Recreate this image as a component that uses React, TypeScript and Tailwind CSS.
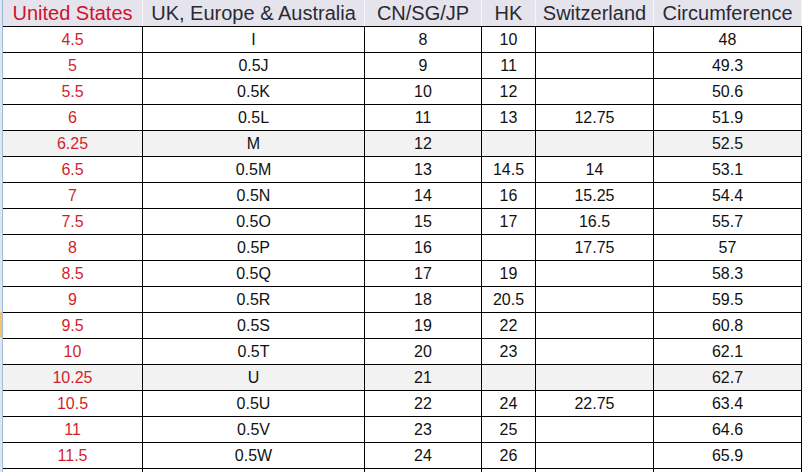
import React from "react";

const rows: [string, string, string, string, string, string, boolean?][] = [
  ["4.5", "I", "8", "10", "", "48"],
  ["5", "0.5J", "9", "11", "", "49.3"],
  ["5.5", "0.5K", "10", "12", "", "50.6"],
  ["6", "0.5L", "11", "13", "12.75", "51.9"],
  ["6.25", "M", "12", "", "", "52.5", true],
  ["6.5", "0.5M", "13", "14.5", "14", "53.1"],
  ["7", "0.5N", "14", "16", "15.25", "54.4"],
  ["7.5", "0.5O", "15", "17", "16.5", "55.7"],
  ["8", "0.5P", "16", "", "17.75", "57"],
  ["8.5", "0.5Q", "17", "19", "", "58.3"],
  ["9", "0.5R", "18", "20.5", "", "59.5"],
  ["9.5", "0.5S", "19", "22", "", "60.8"],
  ["10", "0.5T", "20", "23", "", "62.1"],
  ["10.25", "U", "21", "", "", "62.7", true],
  ["10.5", "0.5U", "22", "24", "22.75", "63.4"],
  ["11", "0.5V", "23", "25", "", "64.6"],
  ["11.5", "0.5W", "24", "26", "", "65.9"],
  ["", "", "", "", "", ""],
];

const headers = ["United States", "UK, Europe & Australia", "CN/SG/JP", "HK", "Switzerland", "Circumference"];
const cols = "grid grid-cols-[140px_222px_117px_54px_118px_148px]";

export default function App() {
  return (
    <div
      className="w-[804px] h-[472px] overflow-hidden bg-white flex items-start"
      style={{ fontFamily: '"Liberation Sans", Arial, sans-serif' }}
    >
      <div className="w-[3px] h-[472px] shrink-0 flex flex-col bg-[#dde7f3] border-r border-[#a3b9d3]">
        <div className="h-[312px] shrink-0" />
        <div className="h-[26px] shrink-0 bg-[#f3c56f]" />
        <div className="flex-1" />
      </div>
      <div className="flex flex-col shrink-0">
        <div className={`${cols} h-[27px] shrink-0 bg-[#e5e4ec] border-b border-black`}>
          {headers.map((h, i) => (
            <div
              key={i}
              className={`flex items-center justify-center text-[20px] leading-none whitespace-nowrap border-r border-[#f6f6fa] ${
                i === 0 ? "text-[#d0102e]" : "text-[#2a2a33]"
              }`}
            >
              {h}
            </div>
          ))}
        </div>
        {rows.map((r, ri) => (
          <div
            key={ri}
            className={`${cols} h-[26px] shrink-0 border-b border-black ${r[6] ? "bg-[#f2f2f2]" : "bg-white"}`}
          >
            {r.slice(0, 6).map((c, ci) => (
              <div
                key={ci}
                className={`flex items-center justify-center text-[16px] leading-none border-r border-black ${
                  ci === 0 ? "text-[#d21f2d]" : "text-[#111]"
                }`}
              >
                {c as string}
              </div>
            ))}
          </div>
        ))}
      </div>
    </div>
  );
}
